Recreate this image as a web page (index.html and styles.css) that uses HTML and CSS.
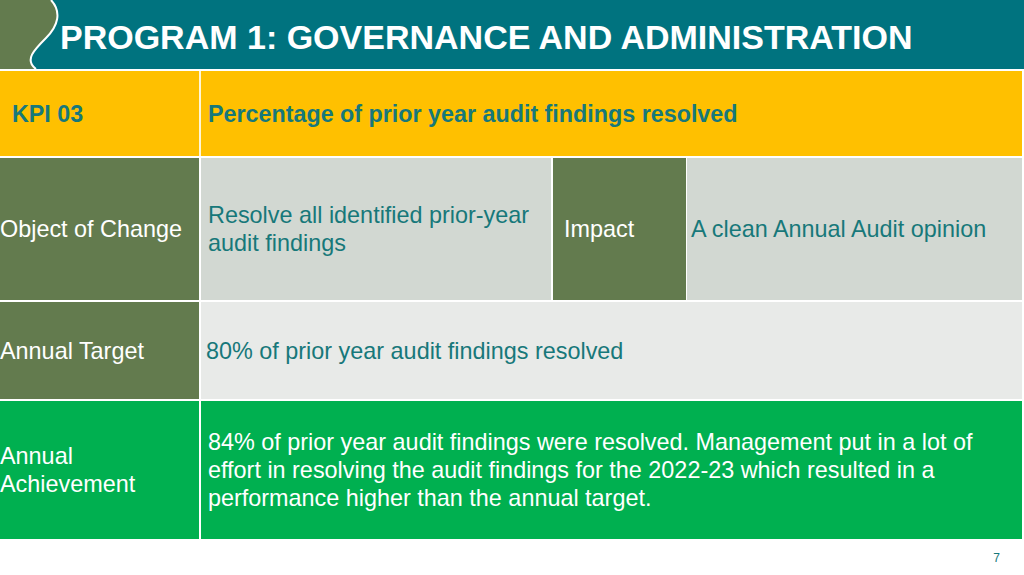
FILE: index.html
```html
<!DOCTYPE html>
<html>
<head>
<meta charset="utf-8">
<link rel="stylesheet" href="styles.css">
</head>
<body>
<header class="header">
  <svg class="swoosh" width="80" height="69" viewBox="0 0 80 69">
    <path d="M0 0 H51 C62 12 58 26 46 38 C34 50 24 60 36 69 H0 Z" fill="#637b4e"/>
    <path d="M51 0 C62 12 58 26 46 38 C34 50 24 60 36 69" fill="none" stroke="#ffffff" stroke-width="2"/>
  </svg>
  <h1 class="title">PROGRAM 1: GOVERNANCE AND ADMINISTRATION</h1>
</header>
<main class="table">
  <div class="row row-kpi">
    <div class="cell kpi-label">KPI 03</div>
    <div class="cell kpi-text">Percentage of prior year audit findings resolved</div>
  </div>
  <div class="row row-object">
    <div class="cell label">Object of Change</div>
    <div class="cell grey">Resolve all identified prior-year<br>audit findings</div>
    <div class="cell label impact">Impact</div>
    <div class="cell grey clean">A clean Annual Audit opinion</div>
  </div>
  <div class="row row-target">
    <div class="cell label">Annual Target</div>
    <div class="cell light">80% of prior year audit findings resolved</div>
  </div>
  <div class="row row-achieve">
    <div class="cell green-label">Annual<br>Achievement</div>
    <div class="cell green-text">84% of prior year audit findings were resolved. Management put in a lot of effort in resolving the audit findings for the 2022-23 which resulted in a performance higher than the annual target.</div>
  </div>
</main>
<footer class="footer"><span class="page">7</span></footer>
</body>
</html>
```

FILE: styles.css
```css
* { box-sizing: border-box; }
html, body { margin: 0; padding: 0; background: #ffffff; }
body {
  width: 1024px;
  height: 575px;
  overflow: hidden;
  font-family: "Liberation Sans", Arial, sans-serif;
}
.header {
  height: 69px;
  background: #00737f;
  display: flex;
  align-items: center;
  position: relative;
}
.swoosh { position: absolute; left: 0; top: 0; }
.title {
  margin: 0 0 0 60px;
  color: #ffffff;
  font-size: 34px;
  font-weight: bold;
  letter-spacing: 0;
  position: relative;
  top: 3px;
}
.table {
  width: 1022px;
  margin-top: 2px;
  display: flex;
  flex-direction: column;
  gap: 2px;
}
.row {
  display: grid;
  grid-template-columns: 199px 1fr;
  column-gap: 2px;
}
.cell {
  display: flex;
  align-items: center;
  font-size: 23.4px;
  line-height: 28px;
}
.row-kpi { height: 85px; background: #fff6d6; }
.kpi-label, .kpi-text {
  background: #ffc000;
  color: #17787a;
  font-weight: bold;
  font-size: 23.3px;
}
.kpi-label { padding-left: 12px; }
.kpi-text { padding-left: 7px; }

.row-object {
  height: 142px;
  grid-template-columns: 199px 350px 132px 1fr;
  background: #ffffff;
}
.label {
  background: #637b4e;
  color: #ffffff;
}
.grey {
  background: #d2d8d2;
  color: #17787a;
  padding-left: 7px;
}
.impact { padding-left: 11px; }
.clean { padding-left: 4px; }
.row-object .cell:nth-child(3) { margin-right: -1px; }

.row-target { height: 97px; }
.light {
  background: #e8eae8;
  color: #17787a;
  padding-left: 5px;
}

.row-achieve { height: 138px; }
.green-label {
  background: #00b050;
  color: #ffffff;
}
.green-text {
  background: #00b050;
  color: #ffffff;
  padding: 0 30px 0 7px;
  line-height: 28px;
}
.footer {
  height: 37px;
  display: flex;
  justify-content: flex-end;
  align-items: center;
  padding-right: 24px;
}
.page {
  font-size: 12px;
  color: #17787a;
}
```
